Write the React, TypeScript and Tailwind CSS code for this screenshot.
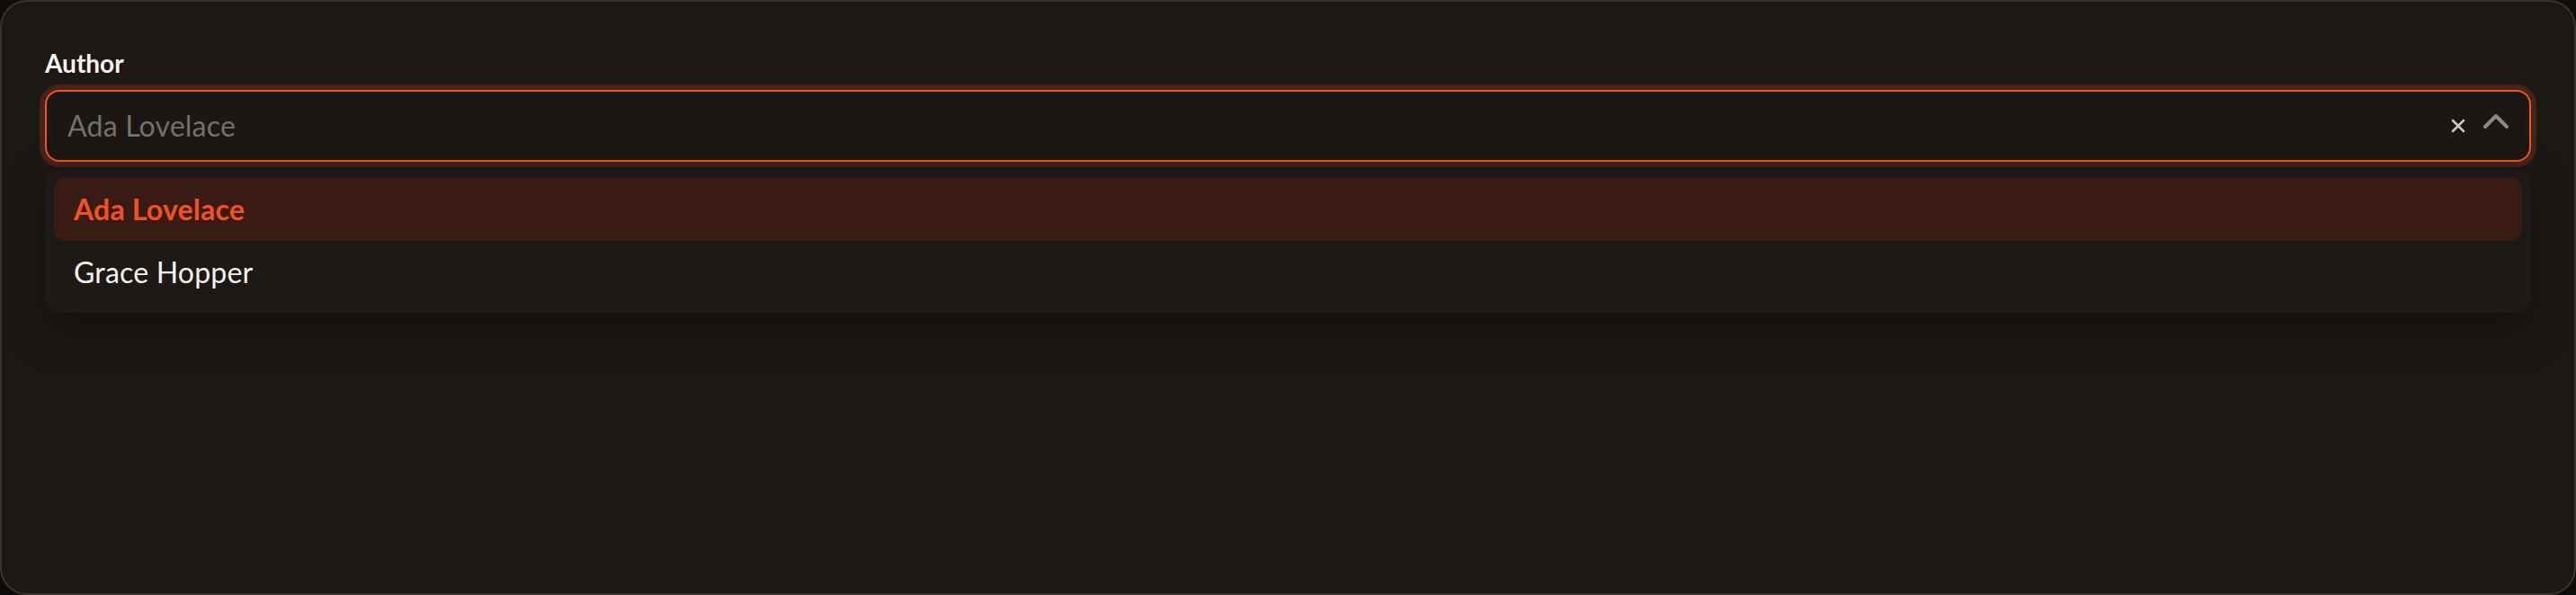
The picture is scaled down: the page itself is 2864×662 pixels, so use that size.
import { X, ChevronUp } from "lucide-react";

const authors = ["Ada Lovelace", "Grace Hopper"];

const App = () => {
    return (
        <div className="h-screen w-full bg-[#0e0c0b] font-['Lato',sans-serif]">
            <div className="h-full rounded-[30px] border-2 border-[#38312d] bg-[#1c1815] px-[48px] pt-[48px]">
                <label className="block text-[28px] leading-[40px] font-bold text-[#f7f4f1]">Author</label>

                <div className="mt-[10px]">
                    <div className="flex h-[80px] items-center rounded-[16px] border-2 border-[#f0561e] bg-[#1b1714] pl-[23px] pr-[13px] ring-[6px] ring-[#46221a]">
                        <input
                            readOnly
                            placeholder="Ada Lovelace"
                            className="flex-1 bg-transparent text-[32px] tracking-[0.2px] text-[#f6f3f0] outline-none placeholder:text-[#75706c]"
                        />
                        <button className="flex size-[24px] items-center justify-center text-[#cdc8c4]">
                            <X size={24} strokeWidth={2.5} />
                        </button>
                        <button className="ml-[6px] flex size-[48px] -translate-y-[5px] items-center justify-center text-[#8e8985]">
                            <ChevronUp size={48} strokeWidth={2} />
                        </button>
                    </div>

                    {/* dropdown */}
                    <div className="mt-[8px] rounded-[14px] bg-[#1d1916] p-[10px] shadow-[0_18px_50px_rgba(0,0,0,0.35)]">
                        {authors.map((name, i) => (
                            <div
                                key={name}
                                className={
                                    i === 0
                                        ? "flex h-[70px] items-center rounded-[12px] bg-[#381c14] px-[22px] text-[32px] tracking-[0.2px] font-bold text-[#f4511e]"
                                        : "flex h-[70px] items-center rounded-[12px] px-[22px] text-[32px] tracking-[0.2px] text-[#f6f3f0]"
                                }
                            >
                                {name}
                            </div>
                        ))}
                    </div>
                </div>
            </div>
        </div>
    );
};

export default App;
